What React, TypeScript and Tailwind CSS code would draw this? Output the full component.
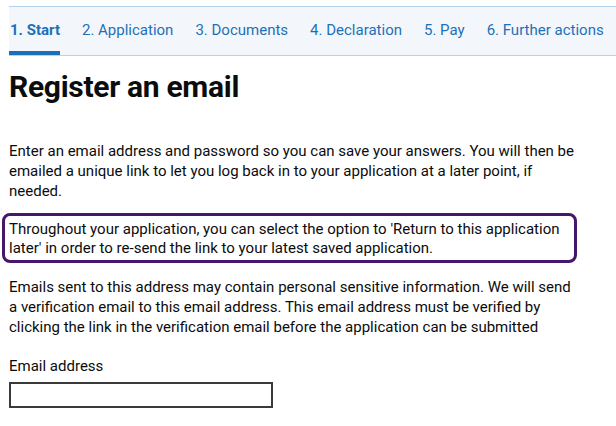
const steps = [
  { label: "1. Start", active: true },
  { label: "2. Application" },
  { label: "3. Documents" },
  { label: "4. Declaration" },
  { label: "5. Pay" },
  { label: "6. Further actions" },
];

export default function App() {
  return (
    <div
      className="min-h-screen bg-white text-[#0b0c0c]"
      style={{ fontFamily: "Roboto, 'Noto Sans', Arial, sans-serif" }}
    >
      {/* step navigation */}
      <div className="pt-[6px] pl-[9px]">
        <nav className="flex h-[50px] items-stretch gap-[21px] border-y border-[#b4d2ee] bg-[#f3f7fb]">
          {steps.map((s) => (
            <div
              key={s.label}
              className={
                "flex items-center border-b-4 pt-[2px] pl-[1px] text-[15px] text-[#1d70b8] whitespace-nowrap " +
                (s.active ? "border-[#1d70b8] font-bold" : "border-transparent")
              }
            >
              {s.label}
            </div>
          ))}
        </nav>
      </div>

      <main className="px-[9px] text-[15px] leading-[20px]">
        <h1 className="mt-[13px] mb-[36px] text-[30px] font-bold leading-[36px] tracking-[-0.3px]">
          Register an email
        </h1>

        <p className="whitespace-nowrap">
          Enter an email address and password so you can save your answers. You will then be
          <br />
          emailed a unique link to let you log back in to your application at a later point, if
          <br />
          needed.
        </p>

        <div className="-ml-[7px] mt-[12px] mr-[30px] rounded-[8px] border-[3px] border-[#46166b] pl-[4px] pt-[4px] pb-[2px]">
          <p className="whitespace-nowrap leading-[19px]">
            Throughout your application, you can select the option to 'Return to this application
            <br />
            later' in order to re-send the link to your latest saved application.
          </p>
        </div>

        <p className="mt-[14px] whitespace-nowrap">
          Emails sent to this address may contain personal sensitive information. We will send
          <br />
          a verification email to this email address. This email address must be verified by
          <br />
          clicking the link in the verification email before the application can be submitted
        </p>

        <label htmlFor="email" className="mt-[19px] block">
          Email address
        </label>
        <input
          id="email"
          type="email"
          className="mt-[6px] block h-[26px] w-[264px] border-2 border-[#3a3a3a] bg-white outline-none"
        />
      </main>
    </div>
  );
}
